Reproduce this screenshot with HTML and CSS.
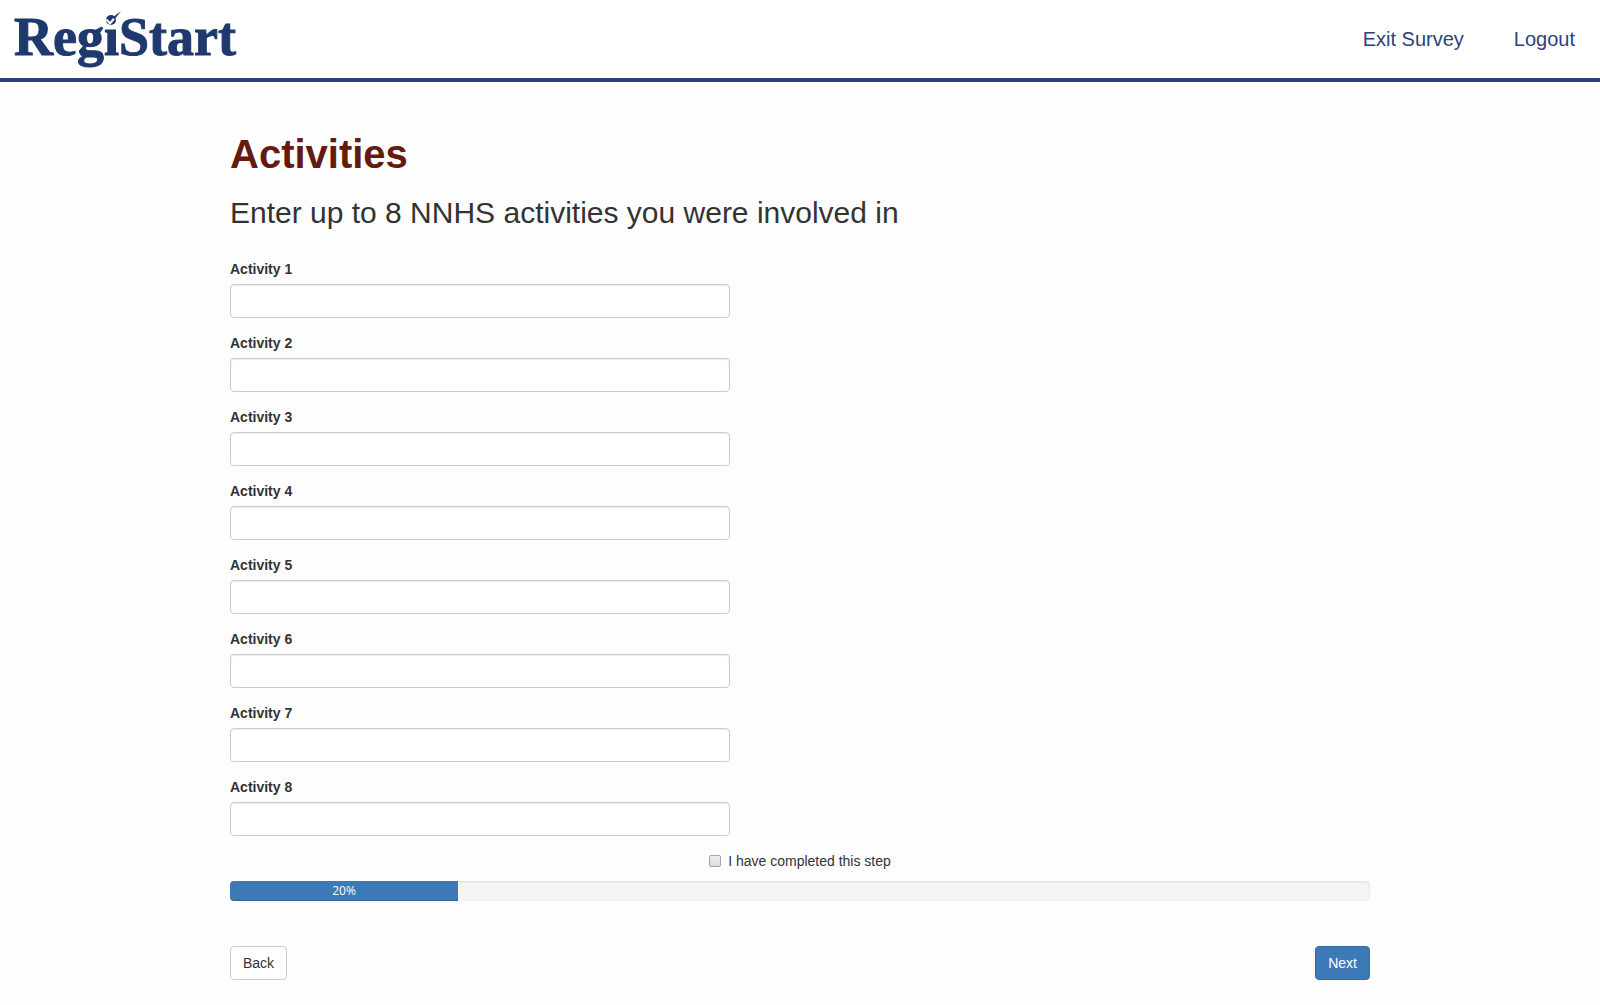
FILE: index.html
```html
<!DOCTYPE html>
<html lang="en">
<head>
  <meta charset="utf-8">
  <title>RegiStart - Activities</title>
  <meta name="viewport" content="width=device-width, initial-scale=1">
  <link rel="stylesheet" href="styles.css">
</head>
<body>
  <header class="site-header">
    <a class="logo" href="#">Reg<span class="logo-i">i<svg class="logo-check" viewBox="0 0 18 18" aria-hidden="true"><path d="M1 3H14V16H1z" fill="#fff"/><circle cx="7" cy="9" r="5" fill="#1f396f"/><path d="M2.500 8.500L6 12.500L13 4" fill="none" stroke="#fff" stroke-width="2"/><path d="M8.500 6.500L17 0L10.500 8.500z" fill="#1f396f"/></svg></span>Start</a>
    <nav class="site-nav">
      <a href="#">Exit Survey</a>
      <a href="#">Logout</a>
    </nav>
  </header>

  <main class="container">
    <h1>Activities</h1>
    <h3>Enter up to 8 NNHS activities you were involved in</h3>

    <form>
      <div class="form-group"><label for="activity1">Activity 1</label><input class="form-control" type="text" id="activity1"></div>
      <div class="form-group"><label for="activity2">Activity 2</label><input class="form-control" type="text" id="activity2"></div>
      <div class="form-group"><label for="activity3">Activity 3</label><input class="form-control" type="text" id="activity3"></div>
      <div class="form-group"><label for="activity4">Activity 4</label><input class="form-control" type="text" id="activity4"></div>
      <div class="form-group"><label for="activity5">Activity 5</label><input class="form-control" type="text" id="activity5"></div>
      <div class="form-group"><label for="activity6">Activity 6</label><input class="form-control" type="text" id="activity6"></div>
      <div class="form-group"><label for="activity7">Activity 7</label><input class="form-control" type="text" id="activity7"></div>
      <div class="form-group"><label for="activity8">Activity 8</label><input class="form-control" type="text" id="activity8"></div>

      <div class="complete">
        <input type="checkbox" id="completed">
        <label for="completed">I have completed this step</label>
      </div>

      <div class="progress">
        <div class="progress-bar" role="progressbar" aria-valuenow="20" aria-valuemin="0" aria-valuemax="100" style="width: 20%">20%</div>
      </div>

      <div class="actions">
        <button class="btn btn-default" type="button">Back</button>
        <button class="btn btn-primary" type="submit">Next</button>
      </div>
    </form>
  </main>
</body>
</html>
```
FILE: styles.css
```css
* {
  box-sizing: border-box;
}

body {
  margin: 0;
  background: #fdfdfd;
  color: #333;
  font: 14px/20px "Liberation Sans", Arial, sans-serif;
}

.site-header {
  display: flex;
  align-items: center;
  justify-content: space-between;
  min-height: 82px;
  padding: 0 0 0 14px;
  background: #fff;
  border-bottom: 4px solid #2c427e;
}

.logo {
  padding-bottom: 4px;
  color: #1f396f;
  font: bold 54px/60px "Liberation Serif", "Times New Roman", serif;
  -webkit-text-stroke: 1px #1f396f;
  text-decoration: none;
}

.logo-i {
  position: relative;
}

.logo-check {
  position: absolute;
  top: 4px;
  left: 0;
  width: 18px;
  height: 18px;
}

.site-nav {
  display: flex;
}

.site-nav a {
  padding: 0 25px;
  color: #2c427e;
  font-size: 20px;
  line-height: 28px;
  text-decoration: none;
}

.container {
  max-width: 1170px;
  margin: 0 auto;
  padding: 50px 15px 24px;
}

h1 {
  margin: 0 0 20px;
  color: #66190f;
  font-size: 40px;
  line-height: 44px;
}

h3 {
  margin: 0 0 30px;
  font-size: 30px;
  font-weight: normal;
  line-height: 33px;
}

.form-group {
  max-width: 500px;
  margin-bottom: 15px;
}

.form-group label {
  display: block;
  margin-bottom: 5px;
  font-weight: bold;
}

.form-control {
  display: block;
  width: 100%;
  height: 34px;
  padding: 6px 12px;
  background: #fff;
  border: 1px solid #ccc;
  border-radius: 4px;
  box-shadow: inset 0 1px 1px rgba(0, 0, 0, 0.075);
  color: #555;
  font: inherit;
}

.complete {
  display: flex;
  align-items: center;
  justify-content: center;
  gap: 7px;
  margin-bottom: 10px;
}

.complete input {
  appearance: none;
  width: 12px;
  height: 12px;
  margin: 0;
  background: linear-gradient(#eee, #dcdcdc);
  border: 1px solid #a6a6a6;
  border-radius: 2px;
}

.complete input:checked {
  background: #3c7ab7;
}

.progress {
  height: 20px;
  margin-bottom: 45px;
  overflow: hidden;
  background: #f4f4f4;
  border-radius: 4px;
  box-shadow: inset 0 1px 2px rgba(0, 0, 0, 0.1);
}

.progress-bar {
  height: 100%;
  background: #3c7ab7;
  box-shadow: inset 0 -1px 0 rgba(0, 0, 0, 0.15);
  color: #fff;
  font-family: "Open Sans", sans-serif;
  font-size: 12px;
  text-align: center;
}

.actions {
  display: flex;
  justify-content: space-between;
}

.btn {
  padding: 6px 12px;
  border: 1px solid;
  border-radius: 4px;
  font: inherit;
  cursor: pointer;
}

.btn-default {
  background: #fff;
  border-color: #ccc;
  color: #333;
}

.btn-primary {
  background: #3c7ab7;
  border-color: #326da6;
  color: #fff;
}
```
